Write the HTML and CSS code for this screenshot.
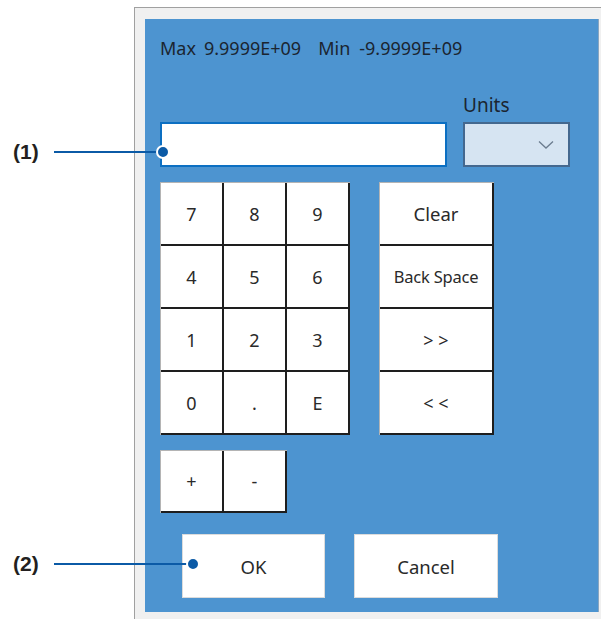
FILE: index.html
```html
<!DOCTYPE html>
<html lang="en">
<head>
    <meta charset="UTF-8">
    <meta name="viewport" content="width=device-width, initial-scale=1.0">
    <title>Numeric Input</title>
    <link rel="stylesheet" href="styles.css">
</head>
<body>

<div class="page">
    <div class="window">
        <div class="panel">
            <p class="limits">
                <span>Max</span>
                <span class="limit-value">9.9999E+09</span>
                <span class="limit-min">Min</span>
                <span class="limit-value">-9.9999E+09</span>
            </p>

            <div class="entry-row">
                <input type="text" class="value-input">
                <div class="units">
                    <label class="units-label">Units</label>
                    <div class="units-select">
                        <svg width="16" height="10" viewBox="0 0 16 10">
                            <polyline points="1,1.5 8,8 15,1.5" fill="none" stroke="#6b7c8f" stroke-width="1.3"/>
                        </svg>
                    </div>
                </div>
            </div>

            <div class="keys">
                <div class="numpad">
                    <button class="key">7</button>
                    <button class="key">8</button>
                    <button class="key">9</button>
                    <button class="key">4</button>
                    <button class="key">5</button>
                    <button class="key">6</button>
                    <button class="key">1</button>
                    <button class="key">2</button>
                    <button class="key">3</button>
                    <button class="key">0</button>
                    <button class="key">.</button>
                    <button class="key">E</button>
                </div>
                <div class="edit-keys">
                    <button class="key key-clear">Clear</button>
                    <button class="key key-small">Back Space</button>
                    <button class="key">&gt; &gt;</button>
                    <button class="key">&lt; &lt;</button>
                </div>
            </div>

            <div class="sign-keys">
                <button class="key">+</button>
                <button class="key">-</button>
            </div>

            <div class="dialog-buttons">
                <button class="dialog-btn">OK</button>
                <button class="dialog-btn">Cancel</button>
            </div>
        </div>
    </div>

    <!-- callout labels over the screenshot -->
    <div class="callout callout-1">
        <span class="callout-label">(1)</span>
        <span class="callout-line"></span>
        <span class="callout-dot"></span>
    </div>
    <div class="callout callout-2">
        <span class="callout-label">(2)</span>
        <span class="callout-line"></span>
        <span class="callout-dot"></span>
    </div>
</div>

</body>
</html>
```

FILE: styles.css
```css
body {
    margin: 0;
    padding: 0;
    background-color: #fff;
    font-family: 'Noto Sans', 'Open Sans', sans-serif;
    color: #222;
}
.page {
    position: relative;
    width: 601px;
    height: 619px;
    overflow: hidden;
}
.window {
    margin-left: 134px;
    margin-top: 7px;
    border-left: 1px solid #a0a0a0;
    border-top: 1px solid #a0a0a0;
    background-color: #f0f0f0;
    padding: 11px 0 7px 10px;
    height: 612px;
    box-sizing: border-box;
}
.panel {
    width: 454px;
    height: 593px;
    box-sizing: border-box;
    background-color: #4d94d0;
    border-right: 1px solid #8aa6c0;
    padding: 19px 0 0 15px;
}
.limits {
    margin: 0;
    height: 20px;
    line-height: 20px;
    font-size: 18px;
    color: #1b2530;
    display: flex;
}
.limit-value {
    margin-left: 8px;
}
.limit-min {
    margin-left: 17px;
}
.limit-min + .limit-value {
    margin-left: 9px;
}
.entry-row {
    display: flex;
    align-items: flex-end;
    gap: 16px;
    margin-top: 36px;
}
.value-input {
    width: 287px;
    height: 45px;
    box-sizing: border-box;
    border: 2px solid #0c6fc2;
    background-color: #fff;
    outline: none;
    margin: 0;
}
.units {
    display: flex;
    flex-direction: column;
    gap: 6px;
}
.units-label {
    font-size: 19px;
    line-height: 22px;
    color: #1b2530;
}
.units-select {
    width: 107px;
    height: 45px;
    box-sizing: border-box;
    background-color: #d6e4f2;
    border: 2px solid #44688f;
    display: flex;
    align-items: center;
    justify-content: flex-end;
    padding-right: 14px;
}
.keys {
    display: flex;
    gap: 29px;
    margin-top: 15px;
}
.numpad {
    display: grid;
    grid-template-columns: repeat(3, 63px);
    grid-auto-rows: 63px;
    border-top: 1px solid #b4b4b4;
    border-left: 1px solid #b4b4b4;
}
.edit-keys {
    display: grid;
    grid-template-columns: 114px;
    grid-auto-rows: 63px;
    border-top: 1px solid #b4b4b4;
    border-left: 1px solid #b4b4b4;
}
.key {
    margin: 0;
    padding: 0;
    background-color: #fff;
    border: none;
    border-right: 2px solid #1e1e1e;
    border-bottom: 2px solid #1e1e1e;
    font-family: 'Noto Sans', 'Open Sans', sans-serif;
    font-size: 18px;
    color: #2a2a2a;
    cursor: pointer;
}
.key-clear {
    font-size: 18.5px;
}
.key-small {
    font-size: 16.5px;
    letter-spacing: -0.2px;
}
.sign-keys {
    display: grid;
    grid-template-columns: repeat(2, 63px);
    grid-auto-rows: 62px;
    width: max-content;
    margin-top: 15px;
    border-top: 1px solid #b4b4b4;
    border-left: 1px solid #b4b4b4;
}
.dialog-buttons {
    display: flex;
    gap: 29px;
    margin-top: 21px;
    margin-left: 22px;
}
.dialog-btn {
    width: 143px;
    height: 64px;
    margin: 0;
    border: 1px solid #dcdcdc;
    background-color: #fff;
    font-family: 'Noto Sans', 'Open Sans', sans-serif;
    font-size: 18.5px;
    color: #2a2a2a;
    cursor: pointer;
}
.dialog-btn + .dialog-btn {
    width: 144px;
}

/* callouts */
.callout {
    position: absolute;
    left: 13px;
    display: flex;
    align-items: center;
}
.callout-1 {
    top: 140px;
}
.callout-2 {
    top: 552px;
}
.callout-label {
    font-family: 'Liberation Sans', Arial, sans-serif;
    font-weight: bold;
    font-size: 21px;
    line-height: 24px;
    color: #231f20;
    width: 28px;
}
.callout-line {
    height: 2px;
    background-color: #0b5aa6;
    margin-left: 13px;
    width: 104px;
}
.callout-2 .callout-line {
    width: 134px;
}
.callout-dot {
    width: 10px;
    height: 10px;
    border-radius: 50%;
    background-color: #0b5aa6;
    border: 2px solid #fff;
    margin-left: -2px;
}
```
